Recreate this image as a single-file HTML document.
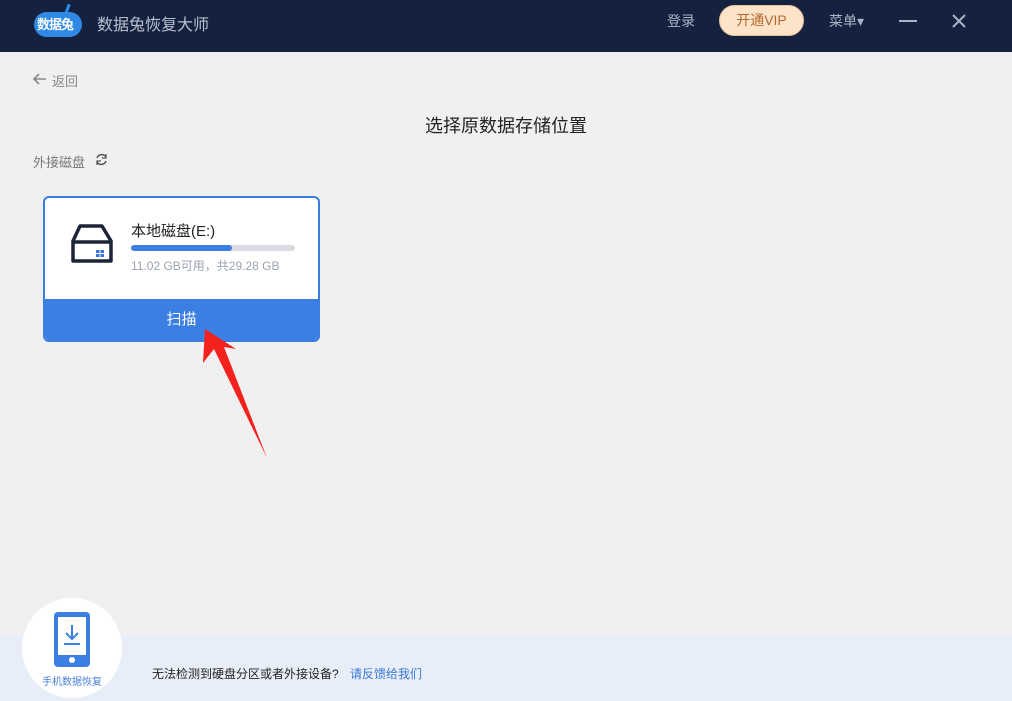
<!DOCTYPE html>
<html><head><meta charset="utf-8"><style>
*{margin:0;padding:0;box-sizing:border-box}
body{width:1012px;height:701px;overflow:hidden;background:#f0f0f0;font-family:"Liberation Sans","Noto Sans CJK SC",sans-serif;position:relative}
.top{position:absolute;left:0;top:0;width:1012px;height:52px;background:#15223f}
.abs{position:absolute}
</style></head><body>
<div class="top">
  <div class="abs" style="left:34px;top:12px;width:48px;height:25px;border-radius:13px;background:#2e8ae6"></div>
  <div class="abs" style="left:66px;top:4px;width:3px;height:10px;background:#2e8ae6;transform:rotate(20deg)"></div>
  <div class="abs" style="left:37px;top:14px;font-size:13px;color:#fff;font-weight:bold;letter-spacing:-1px">数据兔</div>
  <div class="abs" style="left:97px;top:11px;font-size:16px;color:#b8c0cf">数据兔恢复大师</div>
  <div class="abs" style="left:667px;top:11px;font-size:14px;color:#aab4c6">登录</div>
  <div class="abs" style="left:719px;top:5px;width:85px;height:31px;border-radius:16px;background:#fde3c8;border:1px solid #e8c29c;font-size:14px;color:#b3692f;text-align:center;line-height:29px">开通VIP</div>
  <div class="abs" style="left:829px;top:11px;font-size:14px;color:#aab4c6">菜单▾</div>
  <div class="abs" style="left:899px;top:20px;width:18px;height:2px;background:#aab4c6"></div>
  <svg class="abs" style="left:951px;top:13px" width="16" height="16"><path d="M2 2L14 14M14 2L2 14" stroke="#aab4c6" stroke-width="2"/></svg>
</div>
<svg class="abs" style="left:32px;top:72px" width="16" height="14"><path d="M14 7H2M7 2L2 7L7 12" stroke="#888" stroke-width="1.6" fill="none"/></svg>
<div class="abs" style="left:52px;top:71px;font-size:13px;color:#888">返回</div>
<div class="abs" style="left:0;width:1012px;top:112px;text-align:center;font-size:18px;color:#222">选择原数据存储位置</div>
<div class="abs" style="left:33px;top:152px;font-size:13px;color:#777">外接磁盘</div>
<svg class="abs" style="left:94px;top:152px" width="15" height="15"><path d="M12 5A5 5 0 0 0 3 6M3 10A5 5 0 0 0 12 9" stroke="#555" stroke-width="1.5" fill="none"/><path d="M12 2V6H8M3 13V9H7" stroke="#555" stroke-width="1.3" fill="none"/></svg>
<div class="abs" style="left:43px;top:196px;width:277px;height:146px;border:2px solid #3a7de0;border-radius:6px;background:#fff;overflow:hidden">
  <div class="abs" style="left:0;bottom:0;width:100%;height:41px;background:#3c7fe3;color:#fff;text-align:center;font-size:15px;line-height:41px">扫描</div>
  <svg class="abs" style="left:25px;top:26px" width="44" height="40"><path d="M10 2H32L41 17V37H3V17Z" stroke="#1c2438" stroke-width="3.5" fill="none" stroke-linejoin="round"/><path d="M3 18H41" stroke="#1c2438" stroke-width="3.5"/><rect x="26" y="26" width="8" height="7" fill="#3a78d6"/><path d="M30 26V33M26 29.5H34" stroke="#fff" stroke-width="1"/></svg>
  <div class="abs" style="left:86px;top:22px;font-size:15px;color:#222">本地磁盘(E:)</div>
  <div class="abs" style="left:86px;top:47px;width:164px;height:6px;border-radius:3px;background:#d8dbe0"><div style="width:101px;height:6px;border-radius:3px;background:#3c7fe3"></div></div>
  <div class="abs" style="left:86px;top:59px;font-size:12px;color:#9aa3b0">11.02 GB可用，共29.28 GB</div>
</div>
<svg class="abs" style="left:0;top:0" width="1012" height="701"><path d="M205 329L236 349L224 347L267 458L214 349L203 363Z" fill="#f4211c"/></svg>
<div class="abs" style="left:0;top:635px;width:1012px;height:66px;background:#e8eef8"></div>
<div class="abs" style="left:22px;top:598px;width:100px;height:100px;border-radius:50%;background:#fff"></div>
<div class="abs" style="left:54px;top:612px;width:36px;height:55px;border-radius:4px;background:#3c7fe3"></div>
<div class="abs" style="left:58px;top:617px;width:28px;height:38px;background:#fff"></div>
<svg class="abs" style="left:58px;top:617px" width="28" height="38"><path d="M14 8V22M8 16L14 22L20 16M6 27H22" stroke="#3c7fe3" stroke-width="2" fill="none"/></svg>
<div class="abs" style="left:69px;top:657px;width:6px;height:6px;border-radius:50%;background:#fff"></div>
<div class="abs" style="left:42px;top:673px;font-size:10px;color:#4a82d8">手机数据恢复</div>
<div class="abs" style="left:152px;top:665px;font-size:12px;color:#222">无法检测到硬盘分区或者外接设备?</div>
<div class="abs" style="left:350px;top:665px;font-size:12px;color:#3a78d6">请反馈给我们</div>
</body></html>
